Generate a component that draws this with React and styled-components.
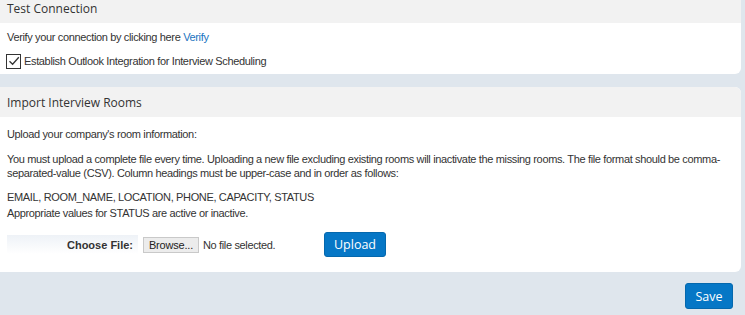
import React from "react";
import styled, { createGlobalStyle } from "styled-components";

const GlobalStyle = createGlobalStyle`
  html, body {
    margin: 0;
    padding: 0;
    background: #dfe6ed;
    overflow: hidden;
  }
`;

const App = () => {
  return (
    <>
      <GlobalStyle />
      <Page>
        <Card>
          <CardHeader>Test Connection</CardHeader>
          <CardBody $pad="6px 6px 5px 7px">
            <Line>
              Verify your connection by clicking here <Link href="#">Verify</Link>
            </Line>
            <CheckRow>
              <CheckBox>
                <svg width="12" height="12" viewBox="0 0 12 12">
                  <path d="M1.5 6.2 L4.6 9.2 L10.8 2.2" fill="none" stroke="#333" strokeWidth="1.3" />
                </svg>
              </CheckBox>
              Establish Outlook Integration for Interview Scheduling
            </CheckRow>
          </CardBody>
        </Card>

        <Card>
          <CardHeader>Import Interview Rooms</CardHeader>
          <CardBody $pad="9px 6px 15px 7px">
            <Line>Upload your company's room information:</Line>
            <Para>
              You must upload a complete file every time. Uploading a new file excluding existing rooms will
              inactivate the missing rooms. The file format should be comma-separated-value (CSV). Column
              headings must be upper-case and in order as follows:
            </Para>
            <Para>EMAIL, ROOM_NAME, LOCATION, PHONE, CAPACITY, STATUS</Para>
            <Line $mt="1px">Appropriate values for STATUS are active or inactive.</Line>
            <FileRow>
              <FileLabel>Choose File:</FileLabel>
              <Browse>Browse...</Browse>
              <NoFile>No file selected.</NoFile>
              <PrimaryButton $w="62px" $h="25px">Upload</PrimaryButton>
            </FileRow>
          </CardBody>
        </Card>

        <Footer>
          <PrimaryButton $w="48px" $h="26px">Save</PrimaryButton>
        </Footer>
      </Page>
    </>
  );
};

export default App;

const Page = styled.div`
  display: flex;
  flex-direction: column;
  gap: 13px;
  margin-top: -7px;
  padding-right: 4px;
  font-family: "Liberation Sans", Arial, sans-serif;
  font-size: 11px;
  letter-spacing: -0.35px;
  color: #333;
`;

const Card = styled.section`
  background: #fff;
  border-radius: 0 6px 6px 0;
  overflow: hidden;
`;

const CardHeader = styled.div`
  background: #f2f2f2;
  height: 30px;
  box-sizing: border-box;
  padding: 2px 0 0 7px;
  line-height: 28px;
  font-family: "Open Sans", sans-serif;
  font-size: 12px;
  letter-spacing: 0;
  color: #333;
`;

const CardBody = styled.div`
  padding: ${(p) => p.$pad};
  display: flex;
  flex-direction: column;
`;

const Line = styled.div`
  line-height: 16px;
  margin-top: ${(p) => p.$mt || "0"};
`;

const Link = styled.a`
  color: #1a73c0;
  text-decoration: none;
`;

const CheckRow = styled.label`
  display: flex;
  align-items: center;
  gap: 3px;
  margin-top: 8px;
  margin-left: -1px;
  line-height: 16px;
`;

const CheckBox = styled.span`
  width: 13px;
  height: 13px;
  border: 1px solid #333;
  display: flex;
  align-items: center;
  justify-content: center;
`;

const Para = styled.p`
  margin: 10px 0 0;
  line-height: 14px;
`;

const FileRow = styled.div`
  display: flex;
  align-items: center;
  margin-top: 11px;
`;

const FileLabel = styled.div`
  width: 126px;
  height: 19px;
  padding-right: 5px;
  display: flex;
  align-items: center;
  justify-content: flex-end;
  font-weight: bold;
  letter-spacing: 0;
  background: linear-gradient(to bottom, #eef2f7, #ffffff);
`;

const Browse = styled.button`
  margin-left: 5px;
  height: 16px;
  width: 56px;
  padding: 0;
  font-family: "Liberation Sans", Arial, sans-serif;
  font-size: 11px;
  letter-spacing: -0.2px;
  color: #222;
  background: #ececec;
  border: 1px solid #c9c9c9;
  border-radius: 0;
`;

const NoFile = styled.span`
  margin-left: 4px;
  width: 121px;
`;

const PrimaryButton = styled.button`
  width: ${(p) => p.$w};
  height: ${(p) => p.$h};
  background: #0677c6;
  color: #fff;
  border: 1px solid #0568ad;
  border-radius: 3px;
  font-family: "Open Sans", sans-serif;
  font-size: 12.5px;
  letter-spacing: 0;
  padding: 0;
`;

const Footer = styled.div`
  display: flex;
  justify-content: flex-end;
  padding-right: 8px;
  margin-top: -2px;
`;
